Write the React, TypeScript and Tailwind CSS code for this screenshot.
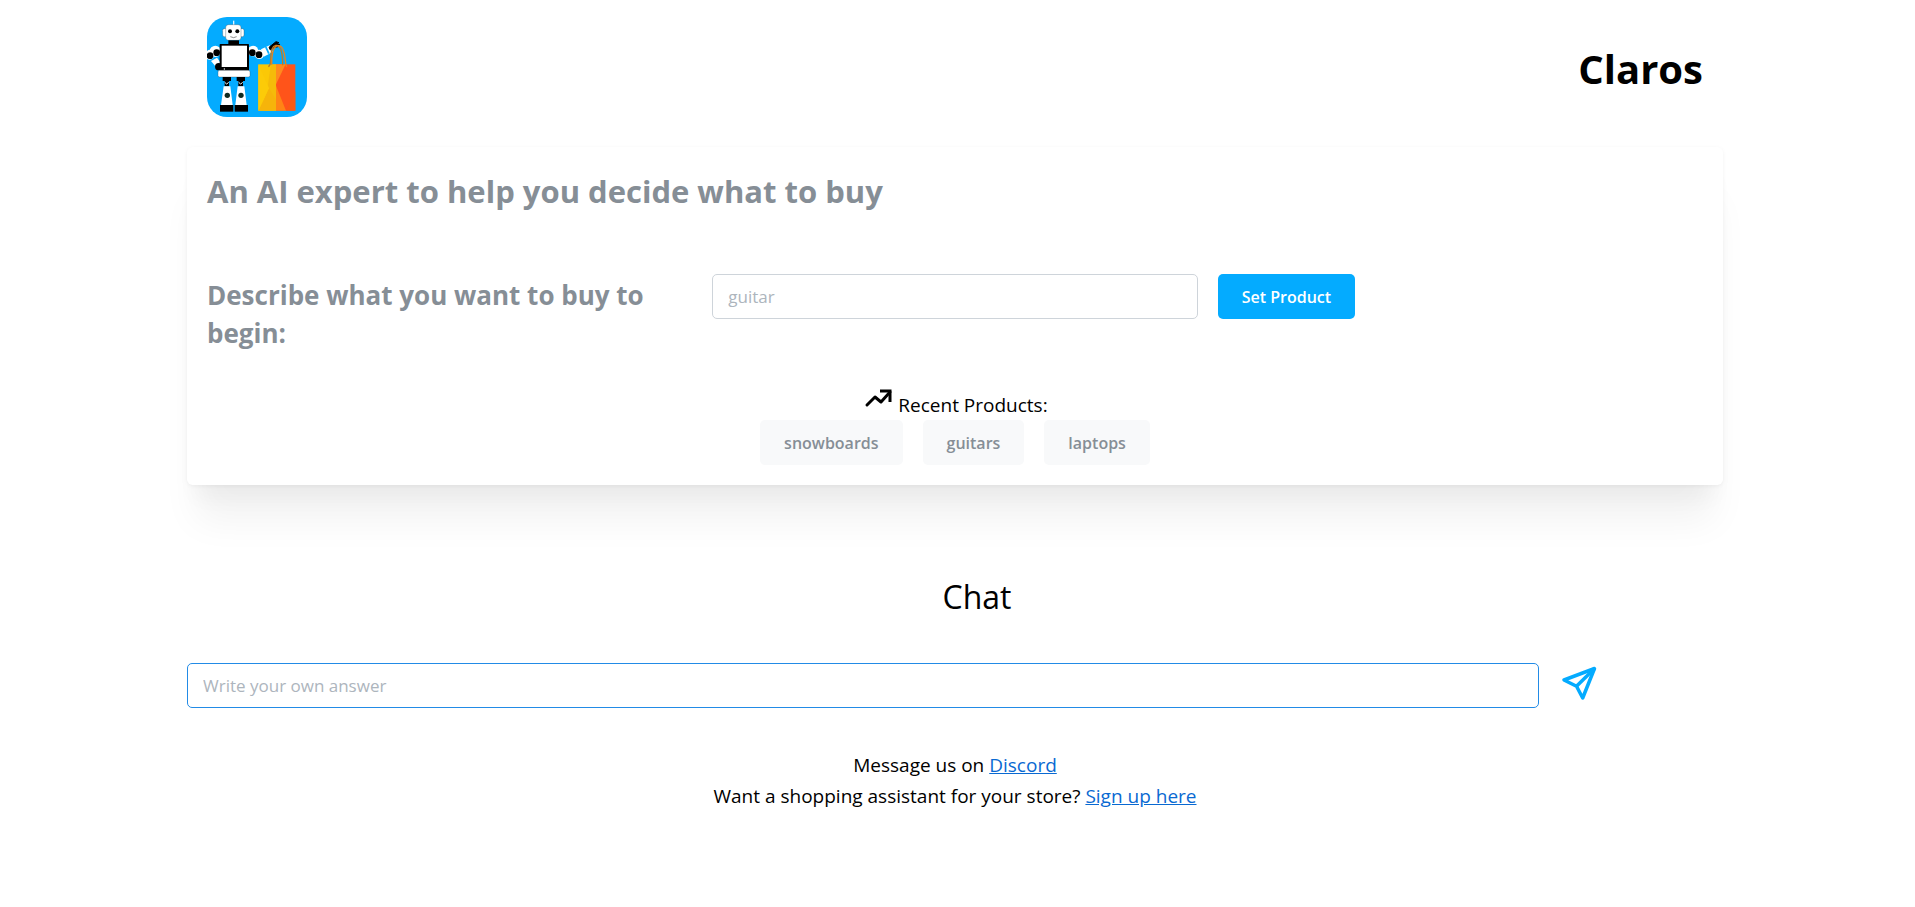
import React from "react";

const recentProducts = ["snowboards", "guitars", "laptops"];

function Logo() {
  return (
    <svg viewBox="0 0 300 300" className="size-[100px]" role="img" aria-label="Claros logo">
      <rect width="300" height="300" rx="60" fill="#04abff" />
      {/* head */}
      <rect x="78" y="11" width="4" height="14" fill="#dff3ff" />
      <rect x="47" y="35" width="64" height="24" rx="5" fill="#fff" stroke="#3a4a55" strokeWidth="1" />
      <rect x="56" y="23" width="46" height="47" rx="9" fill="#fff" stroke="#3a4a55" strokeWidth="1" />
      <circle cx="69" cy="43" r="6" />
      <circle cx="91" cy="43" r="6" />
      <path d="M70 59q10 6 19 0" fill="none" stroke="#555" strokeWidth="2" />
      <rect x="64" y="70" width="32" height="14" />
      {/* left arm */}
      <path d="M12 132l18-10 16 22-14 12z" fill="#fff" />
      <circle cx="25" cy="103" r="17" fill="#fff" />
      <path d="M0 102q8-8 17 0l2 20q-8 10-19 4z" fill="#fff" />
      <circle cx="29" cy="107" r="10" />
      <circle cx="9" cy="116" r="10" />
      <circle cx="35" cy="149" r="11" />
      {/* right arm */}
      <circle cx="138" cy="102" r="16" fill="#fff" />
      <circle cx="157" cy="112" r="14" fill="#fff" />
      <path d="M162 97l26-12 9 20-27 14z" fill="#fff" />
      <path d="M174 91l5-2 9 20-5 2z" fill="#04abff" />
      <circle cx="136" cy="107" r="10" />
      <circle cx="156" cy="113" r="10" />
      {/* torso */}
      <rect x="38" y="81" width="88" height="83" rx="2" />
      <rect x="44" y="86" width="76" height="64" fill="#fff" />
      <circle cx="52" cy="156" r="2" fill="#fff" />
      <rect x="33" y="160" width="96" height="20" rx="5" fill="#fff" stroke="#3a4a55" strokeWidth="1" />
      {/* legs */}
      <path d="M47 180h25v12h-6v16H53v-16h-6zM89 180h25v12h-6v16H94v-16h-5z" />
      <path d="M53 196l6 5 6-5M95 196l6 5 6-5" fill="none" stroke="#fff" strokeWidth="3" />
      <path d="M50 208h20l7 56H42zM92 208h20l7 56H85z" fill="#fff" />
      <circle cx="61" cy="235" r="8" fill="#102b20" />
      <circle cx="102" cy="235" r="8" fill="#102b20" />
      <rect x="39" y="264" width="40" height="20" />
      <rect x="83" y="264" width="40" height="20" />
      {/* shopping bag */}
      <rect x="154" y="142" width="53" height="139" fill="#fbc806" />
      <path d="M192 142h15v139h-36z" fill="#f2b50c" opacity="0.7" />
      <path d="M154 281l32-67 21 35v32z" fill="#f6b40a" />
      <path d="M154 142l32 72-32 67z" fill="#fccb08" />
      <path d="M207 142h58v139h-58z" fill="#ff541a" />
      <path d="M207 142h29l-29 60z" fill="#ff8a1e" />
      <path d="M207 206l30 75h-30z" fill="#ff8415" />
      <path d="M237 281l28-58v58z" fill="#fb5a13" />
      {/* gripper */}
      <path d="M186 91l21-17 9 3-12 7 14-2-4 7-12 2-12 8z" stroke="#000" strokeWidth="3" strokeLinejoin="round" />
      {/* bag handles */}
      <path d="M184 149q8-4 7-22c0-22 5-40 15-42 14-1 21 18 21 60" fill="none" stroke="#c07a22" strokeWidth="4" />
      <path d="M194 143c0-36 7-57 20-57 14 0 19 20 21 45q1 12 4 19" fill="none" stroke="#e8841b" strokeWidth="4" />
    </svg>
  );
}

function TrendIcon() {
  return (
    <svg viewBox="0 0 32 32" className="size-8" fill="none" stroke="currentColor" strokeWidth="3" aria-hidden="true">
      <path d="M5 21l8-8 6 5L28 8" strokeLinecap="round" strokeLinejoin="round" />
      <path d="M18 7h10v11" />
    </svg>
  );
}

function SendIcon() {
  return (
    <svg viewBox="0 0 40 40" className="size-10" fill="none" stroke="#04abff" strokeWidth="3.5" strokeLinejoin="round" aria-hidden="true">
      <path d="M35.5 5.5L5 17 17.5 23.3 23.7 35z" />
      <path d="M35.5 5.5L17.5 23.3" />
    </svg>
  );
}

export default function App() {
  return (
    <div className="bg-white px-4 pr-[21px] font-['Open_Sans','Noto_Sans',sans-serif] text-black">
      <div className="mx-auto max-w-[1536px]">
        <header className="flex items-start justify-between px-5 pt-[17px]">
          <Logo />
          <h1 className="pt-6 text-[40px] leading-[56px] font-bold">Claros</h1>
        </header>

        <main>
          <section className="mt-[30px] rounded-md p-5 shadow-[0_1px_4px_rgba(0,0,0,0.05),0_45px_35px_-9px_rgba(0,0,0,0.05),0_21px_21px_-9px_rgba(0,0,0,0.04)]">
            <h2 className="text-[31px] leading-[48px] font-bold text-[#868e96]">
              An AI expert to help you decide what to buy
            </h2>
            <form className="mt-[59px] grid grid-cols-3 items-start gap-5" onSubmit={(e) => e.preventDefault()}>
              <label htmlFor="product" className="pt-[2px] text-[26px] leading-[38px] font-bold text-[#868e96]">
                Describe what you want to buy to begin:
              </label>
              <input
                id="product"
                type="text"
                placeholder="guitar"
                className="h-[45px] w-full rounded-[5px] border border-[#ced4da] bg-white px-[15px] text-[17px] outline-none placeholder:text-[#adb5bd]"
              />
              <button type="submit" className="h-[45px] justify-self-start rounded-[5px] bg-[#04abff] px-6 text-[16px] font-semibold text-white">
                Set Product
              </button>
            </form>
            <div className="mt-8 flex h-9 items-end justify-center gap-1">
              <span className="self-start">
                <TrendIcon />
              </span>
              <p className="text-[19px] leading-[30px]">Recent Products:</p>
            </div>
            <div className="flex justify-center gap-5">
              {recentProducts.map((name) => (
                <button key={name} type="button" className="h-[45px] rounded-[5px] bg-[#f8f9fa] px-6 text-[16px] font-semibold text-[#868e96]">
                  {name}
                </button>
              ))}
            </div>
          </section>

          <section>
            <h2 className="mt-[88px] pl-11 text-center text-[32px] leading-[48px]">Chat</h2>
            <form className="mt-[42px] flex items-start gap-5" onSubmit={(e) => e.preventDefault()}>
              <input
                type="text"
                aria-label="Your answer"
                placeholder="Write your own answer"
                className="h-[45px] w-[88%] rounded-[5px] border border-[#228be6] bg-white px-[15px] text-[17px] outline-none placeholder:text-[#adb5bd]"
              />
              <button type="submit" aria-label="Send">
                <SendIcon />
              </button>
            </form>
          </section>
        </main>

        <footer className="mt-[42px] pb-8 text-center text-[19px] leading-[31px]">
          <p>
            Message us on <a href="#discord" className="text-[#0969d2] underline">Discord</a>
          </p>
          <p>
            Want a shopping assistant for your store? <a href="#signup" className="text-[#0969d2] underline">Sign up here</a>
          </p>
        </footer>
      </div>
    </div>
  );
}
